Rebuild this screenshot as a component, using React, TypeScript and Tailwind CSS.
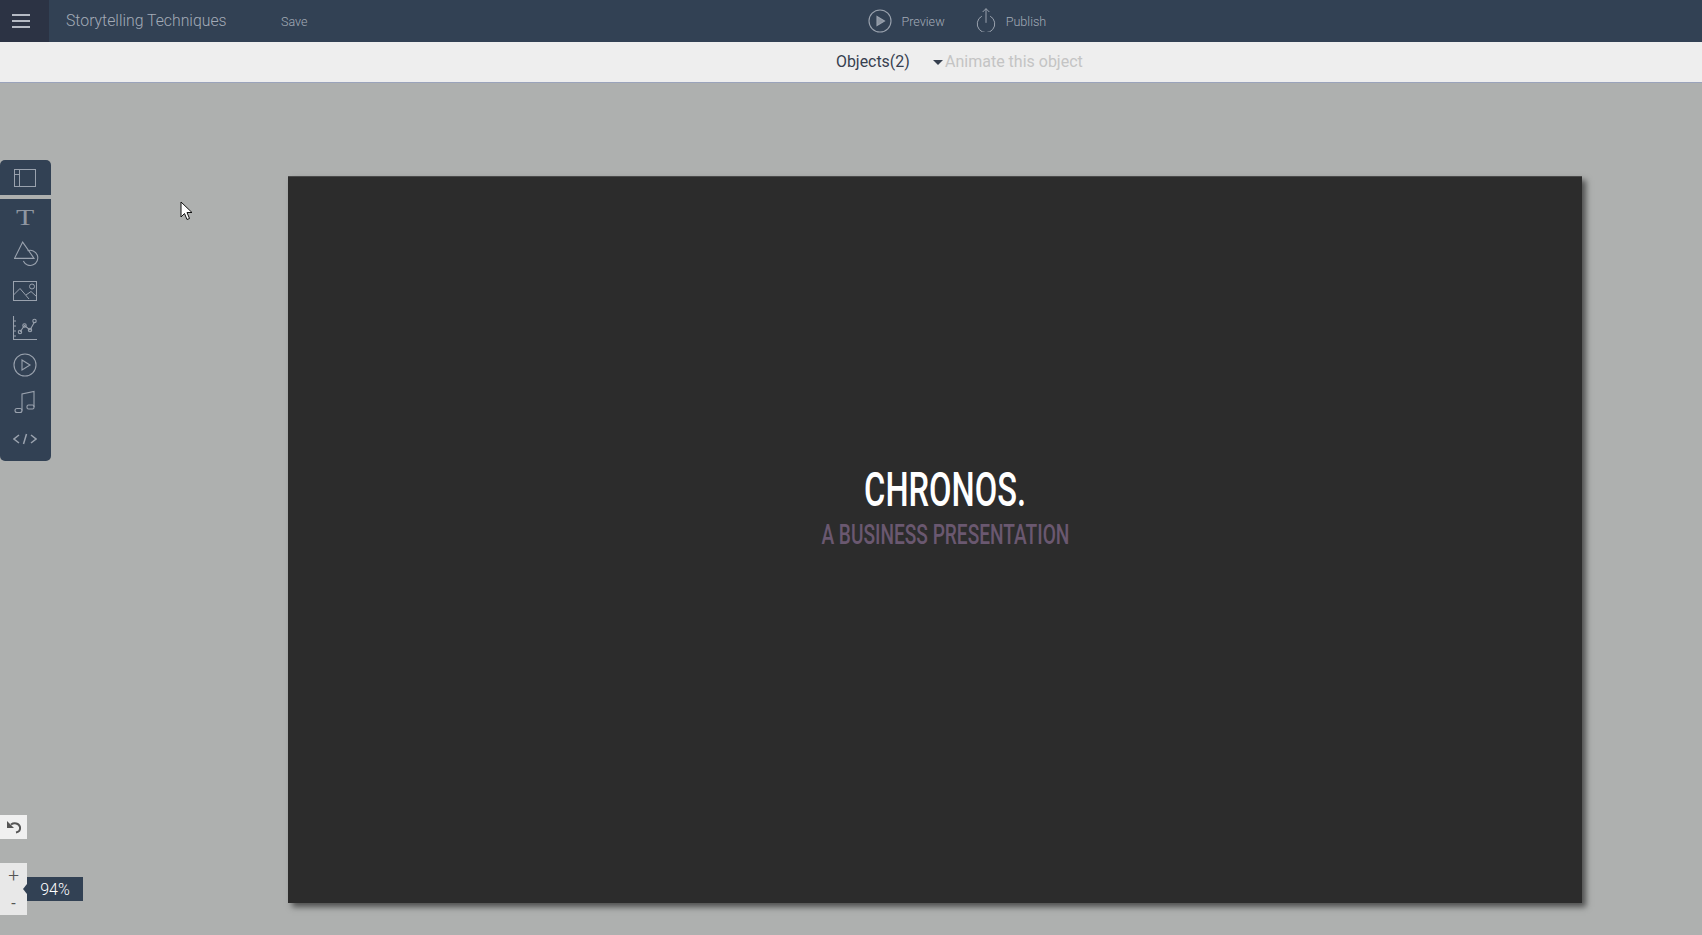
const stroke = "#9aa2ae";

function Tool({ children, h = "h-[37px]" }: { children: React.ReactNode; h?: string }) {
  return <div className={`flex items-center justify-center w-full pr-[1px] ${h}`}>{children}</div>;
}

export default function App() {
  return (
    <div className="relative flex flex-col h-[935px] w-full overflow-hidden bg-[#aeb0af] font-['Roboto',sans-serif]">
      <header className="flex items-center h-[42px] shrink-0 bg-[#324154]">
        <div className="flex items-center w-[49px] h-full pl-[12px] bg-[#2c3344]">
          <div className="flex flex-col gap-[4px] w-[18px]">
            <span className="h-[2px] bg-[#b5bac4]" />
            <span className="h-[2px] bg-[#b5bac4]" />
            <span className="h-[2px] bg-[#b5bac4]" />
          </div>
        </div>
        <span className="ml-[17px] w-[215px] text-[15.8px] font-light text-[#a3abb7]">Storytelling Techniques</span>
        <span className="mt-[2px] text-[12.5px] font-light text-[#a3abb7]">Save</span>
        <div className="ml-[561px] flex items-center">
          <svg viewBox="0 0 24 24" fill="none" stroke={stroke} strokeWidth="1.1" className="w-[24px] h-[24px]">
            <circle cx="12" cy="12" r="11" />
            <path d="M9 7.5 L16.5 12 L9 16.5 Z" fill="#8a93a0" />
          </svg>
          <span className="mt-[2px] ml-[9px] text-[12.6px] font-light text-[#a3abb7]">Preview</span>
        </div>
        <div className="ml-[31px] flex items-center">
          <svg viewBox="0 0 24 30" fill="none" stroke={stroke} strokeWidth="1.2" className="w-[20px] h-[25px] -mt-[3px]">
            <path d="M7 11 A10.5 10.5 0 1 0 17 11" />
            <path d="M12 19 V2 M8 6 L12 2 L16 6" />
          </svg>
          <span className="mt-[2px] ml-[10px] text-[12.6px] font-light text-[#a3abb7]">Publish</span>
        </div>
      </header>

      <div className="flex items-center h-[41px] shrink-0 bg-[#eeeeee] border-b border-[#9aa3bb] pl-[836px]">
        <span className="w-[97px] text-[15.9px] text-[#36404f]">Objects(2)</span>
        <span className="w-0 h-0 mr-[2px] border-x-[5px] border-x-transparent border-t-[5px] border-t-[#36404f]" />
        <span className="text-[16px] text-[#c4c4c4]">Animate this object</span>
      </div>

      <main className="flex-1 pl-[288px] pt-[93px]">
        <div className="flex flex-col items-center justify-center w-[1294px] h-[727px] pl-[21px] pb-[64px] bg-[#2c2c2c] shadow-[4px_4px_6px_rgba(0,0,0,0.55)] border-t border-[#4a4a4a]">
          <h1 className="scale-x-[0.68] text-[48px] leading-[52px] font-medium whitespace-nowrap text-white">CHRONOS.</h1>
          <h2 className="mt-[2px] scale-x-[0.695] text-[27.5px] leading-[34px] font-medium whitespace-nowrap text-[#6a5870]">A BUSINESS PRESENTATION</h2>
        </div>
      </main>

      <nav className="absolute left-0 top-[160px] w-[51px] flex flex-col">
        <div className="h-[35px] bg-[#324154] rounded-t-[5px] pr-[1px] flex items-center justify-center">
          <svg viewBox="0 0 22 18" fill="none" stroke={stroke} strokeWidth="1" className="w-[22px] h-[18px]">
            <rect x="0.5" y="0.5" width="21" height="17" />
            <path d="M5.5 0.5 V17.5 M0.5 5.5 H5.5" />
          </svg>
        </div>
        <div className="mt-[4px] h-[262px] bg-[#324154] rounded-b-[5px] flex flex-col">
          <Tool h="h-[36px]">
            <span className="scale-x-[1.3] text-[23px] leading-none text-[#8f96a1] font-['Liberation_Serif',serif]">T</span>
          </Tool>
          <Tool>
            <svg viewBox="0 0 24 24" fill="none" stroke={stroke} strokeWidth="1" className="ml-[3px] w-[26px] h-[26px]">
              <path d="M8 1 L0.5 16 H18.5 Z" />
              <path d="M12.5 9 A7 7 0 1 1 8.6 18.5" />
            </svg>
          </Tool>
          <Tool>
            <svg viewBox="0 0 24 20" fill="none" stroke={stroke} strokeWidth="1" className="w-[24px] h-[20px]">
              <rect x="0.5" y="0.5" width="23" height="19" />
              <circle cx="19" cy="5.5" r="2.5" />
              <path d="M0.5 14 L7 7.5 L16 18 M13 14 L18 10.5 L23.5 15.5" />
            </svg>
          </Tool>
          <Tool>
            <svg viewBox="0 0 24 24" fill="none" stroke={stroke} strokeWidth="1.1" className="w-[24px] h-[24px]">
              <path d="M0.5 0 V23.5 H24 M0.5 5 H3 M0.5 10 H3 M0.5 15 H3 M0.5 20 H3" />
              <path d="M7 16 L11.5 9.5 L17 14 L21.5 6" />
              <circle cx="7" cy="16" r="1.7" />
              <circle cx="11.5" cy="9.5" r="1.7" />
              <circle cx="17" cy="14" r="1.7" />
              <circle cx="21.5" cy="5" r="1.7" />
            </svg>
          </Tool>
          <Tool>
            <svg viewBox="0 0 24 24" fill="none" stroke={stroke} strokeWidth="1.1" className="w-[24px] h-[24px]">
              <circle cx="12" cy="12" r="11" />
              <path d="M9 7 L17 12 L9 17 Z" />
            </svg>
          </Tool>
          <Tool>
            <svg viewBox="0 0 22 24" fill="none" stroke={stroke} strokeWidth="1.1" className="w-[22px] h-[24px]">
              <path d="M8 20.5 V4 L20 1.5 V17" />
              <rect x="1" y="18.5" width="7" height="4" rx="2" />
              <rect x="13" y="15" width="7" height="4" rx="1.5" />
            </svg>
          </Tool>
          <Tool>
            <svg viewBox="0 0 24 12" fill="none" stroke={stroke} strokeWidth="1.5" className="w-[24px] h-[12px]">
              <path d="M6 2 L1 6 L6 10 M18 2 L23 6 L18 10 M13.5 1 L10.5 11" />
            </svg>
          </Tool>
        </div>
      </nav>

      <svg viewBox="0 0 13 20" className="absolute left-[180px] top-[201px] w-[13px] h-[20px]">
        <path d="M1 1 V16 L4.5 12.5 L7 18.5 L9.5 17.5 L7 11.5 H12 Z" fill="#fff" stroke="#111" strokeWidth="1" />
      </svg>

      <button className="absolute left-0 top-[815px] w-[27px] h-[24px] bg-[#f0f0f0] flex items-center justify-center">
        <svg viewBox="0 0 16 14" fill="none" className="w-[16px] h-[14px]">
          <path d="M5 4.5 C8 2.5 13 3 14 7 C14.5 10 12.5 12 10 12.5" stroke="#555" strokeWidth="2" />
          <path d="M1 1 V8 H8 Z" fill="#555" />
        </svg>
      </button>

      <div className="absolute left-0 top-[863px] w-[27px] h-[52px] bg-[#e8e8e8] flex flex-col items-center text-[#555]">
        <span className="h-[26px] text-[19px] font-light leading-[25px]">+</span>
        <span className="h-[26px] text-[16px] leading-[29px]">-</span>
      </div>
      <div className="absolute left-[27px] top-[877px] w-[56px] h-[24px] pt-[1px] bg-[#324154] flex items-center justify-center text-[16px] font-light text-white">
        94%
        <span className="absolute -left-[4px] top-[7px] w-0 h-0 border-y-[5px] border-y-transparent border-r-[4px] border-r-[#324154]" />
      </div>
    </div>
  );
}
